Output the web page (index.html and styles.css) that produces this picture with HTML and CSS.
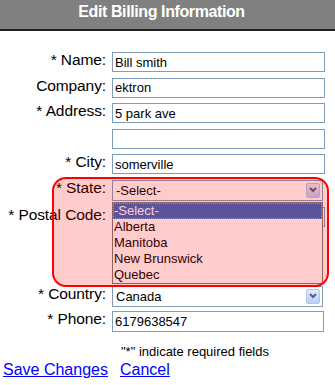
FILE: index.html
```html
<!DOCTYPE html>
<html lang="en">
<head>
    <meta charset="UTF-8">
    <meta name="viewport" content="width=device-width, initial-scale=1.0">
    <title>Edit Billing Information</title>
    <link rel="stylesheet" href="styles.css">
</head>
<body>
    <div class="title">Edit Billing Information</div>
    <form class="billing">
        <div class="row"><label>* Name:</label><input class="field" type="text" value="Bill smith"></div>
        <div class="row"><label>Company:</label><input class="field" type="text" value="ektron"></div>
        <div class="row"><label>* Address:</label><input class="field" type="text" value="5 park ave"></div>
        <div class="row"><label></label><input class="field" type="text" value=""></div>
        <div class="row"><label>* City:</label><input class="field" type="text" value="somerville"></div>

        <!-- state: dropdown is drawn open -->
        <div class="row"><label>* State:</label>
            <div class="select">
                <span>-Select-</span>
                <span class="arrow"><svg width="8" height="6" viewBox="0 0 8 6"><polyline points="1,1 4,4 7,1" fill="none" stroke="#4d6185" stroke-width="2"/></svg></span>
            </div>
        </div>
        <div class="row"><label>* Postal Code:</label><input class="field" type="text" value=""></div>
        <div class="row row-extra"><label></label><input class="field tall" type="text" value=""></div>

        <div class="row row-country"><label>* Country:</label>
            <div class="select">
                <span>Canada</span>
                <span class="arrow"><svg width="8" height="6" viewBox="0 0 8 6"><polyline points="1,1 4,4 7,1" fill="none" stroke="#4d6185" stroke-width="2"/></svg></span>
            </div>
        </div>
        <div class="row row-phone"><label>* Phone:</label><input class="field tall" type="text" value="6179638547"></div>

        <p class="note">"*" indicate required fields</p>
        <div class="actions"><a href="#">Save Changes</a><a href="#">Cancel</a></div>

        <ul class="state-list">
            <li class="selected">-Select-</li>
            <li>Alberta</li>
            <li>Manitoba</li>
            <li>New Brunswick</li>
            <li>Quebec</li>
        </ul>
        <div class="callout"></div>
    </form>
</body>
</html>
```

FILE: styles.css
```css
body {
    margin: 0;
    font-family: "Liberation Sans", Arial, sans-serif;
    background-color: #fff;
    color: #000;
}
.title {
    height: 24px;
    padding: 0 12px 5px 0;
    background-color: #808080;
    border-bottom: 2px solid #222;
    color: #fff;
    font-weight: bold;
    font-size: 16px;
    line-height: 24px;
    letter-spacing: -0.4px;
    text-align: center;
}
.billing {
    position: relative;
    padding-top: 21px;
}
.row {
    display: flex;
    align-items: flex-start;
    margin-bottom: 5.6px;
}
.row label {
    width: 106px;
    margin-right: 6px;
    text-align: right;
    font-size: 15.5px;
    line-height: 15px;
    letter-spacing: -0.1px;
    white-space: nowrap;
}
.field {
    box-sizing: border-box;
    width: 213px;
    height: 20px;
    margin: 0;
    padding: 0 2px;
    border: 1px solid #7f9db9;
    font-family: "Liberation Sans", Arial, sans-serif;
    font-size: 13px;
    color: #000;
    outline: none;
}
.field.tall {
    height: 21px;
    width: 212px;
}
.select {
    box-sizing: border-box;
    display: flex;
    align-items: center;
    justify-content: space-between;
    width: 211px;
    height: 21px;
    padding: 0 2px 0 3px;
    border: 1px solid #7f9db9;
    font-size: 13px;
}
.arrow {
    box-sizing: border-box;
    display: flex;
    align-items: center;
    justify-content: center;
    width: 14px;
    height: 15px;
    border: 1px solid #b3c4ec;
    border-radius: 2px;
    background: linear-gradient(#e2eafe, #b9cdf8);
}
.row-extra {
    margin-top: 24.4px;
    margin-bottom: 0;
}
.row-extra .field {
    width: 211px;
}
.row-country {
    margin-top: 14px;
    margin-bottom: 4px;
}
.row-phone {
    margin-bottom: 0;
}
.note {
    margin: 12px 0 0;
    padding-left: 121px;
    font-size: 13px;
    line-height: 15px;
}
.actions {
    display: flex;
    gap: 12px;
    margin-top: 2px;
    padding-left: 3px;
    font-size: 16px;
    line-height: 18px;
}
.actions a {
    color: #0000ff;
}
.state-list {
    position: absolute;
    top: 171px;
    left: 112px;
    box-sizing: border-box;
    width: 211px;
    margin: 0;
    padding: 0;
    list-style: none;
    background: #fff;
    border: 1px solid #7a7a7a;
    font-size: 13px;
    line-height: 16px;
}
.state-list li {
    padding-left: 1px;
    height: 16px;
}
.state-list .selected {
    background-color: #316ac5;
    color: #fff;
    outline: 1px dotted #e0a040;
    outline-offset: -1px;
}
.callout {
    position: absolute;
    top: 146px;
    left: 52px;
    box-sizing: border-box;
    width: 277px;
    height: 110px;
    border: 2px solid #ff0000;
    border-radius: 14px;
    background-color: rgba(255, 0, 0, 0.2);
    pointer-events: none;
}
```
